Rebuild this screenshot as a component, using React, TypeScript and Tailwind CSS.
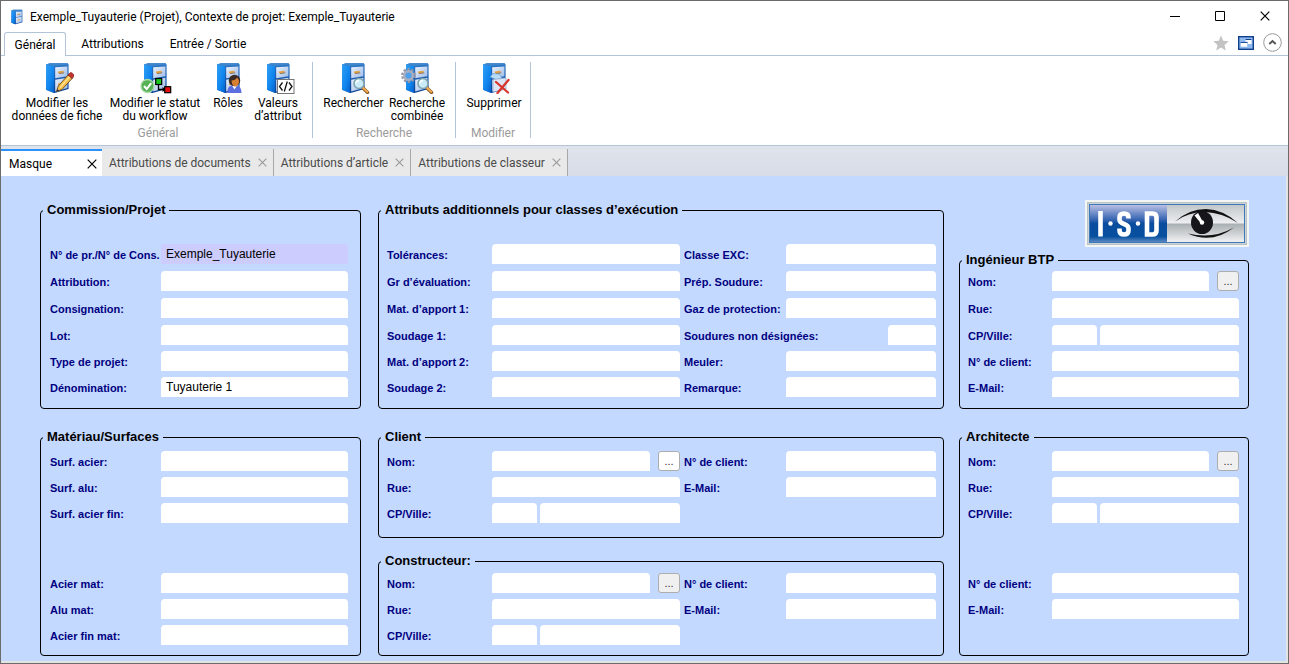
import React from "react";

function Cabinet() {
  return (
    <g>
      <defs>
        <linearGradient id="cabSide" x1="0" y1="0" x2="1" y2="1">
          <stop offset="0" stopColor="#2fa0f5" />
          <stop offset="0.6" stopColor="#0f84ee" />
          <stop offset="1" stopColor="#0560c4" />
        </linearGradient>
        <linearGradient id="cabFront" x1="0" y1="0" x2="0" y2="1">
          <stop offset="0" stopColor="#2f78c8" />
          <stop offset="1" stopColor="#0a3f96" />
        </linearGradient>
        <linearGradient id="cabDrawer" x1="0" y1="0" x2="1" y2="1">
          <stop offset="0" stopColor="#eaf1fc" />
          <stop offset="1" stopColor="#9dbbe8" />
        </linearGradient>
      </defs>
      <path d="M5 2.5 9 1.2H26.5L27.6 2.6V27L13.5 31 5 27.8Z" fill="url(#cabFront)" />
      <path d="M5 2.6 13 4V31L5 27.8Z" fill="url(#cabSide)" />
      <path d="M5 2.5 9 1.2H26.5L27.6 2.6 13 4Z" fill="#3f86cc" />
      <path d="M14.2 5.2 26.4 4.4V14.3L14.2 16.3Z" fill="url(#cabDrawer)" />
      <path d="M14.2 17.7 26.4 15.7V26L14.2 29.4Z" fill="url(#cabDrawer)" />
      <path d="M17 9.6 22.6 8.8V10.4L17 11.2Z" fill="#e5a23b" />
      <path d="M18 11.6 23.2 10.8" stroke="#7c5a33" strokeWidth="0.8" />
      <path d="M17 21.6 22.6 20.6V22.2L17 23.2Z" fill="#e5a23b" />
    </g>
  );
}

function Lens() {
  return (
    <g>
      <path d="m26 26 4.500 4.500" stroke="#8a5a30" strokeWidth="3.4" strokeLinecap="round" />
      <path d="m26 25.700 4.200 4.200" stroke="#f3ad4a" strokeWidth="2" strokeLinecap="round" />
      <circle cx="22" cy="21.5" r="5" fill="#c9ecf8" stroke="#7fa3ac" strokeWidth="1.5" />
      <path d="M19 21.5a3 3 0 0 1 3-3" stroke="#fff" strokeWidth="1.4" fill="none" />
    </g>
  );
}

const overlays: Record<string, React.ReactNode> = {
  none: null,
  edit: (
    <g>
      <path d="m15.500 29.500 1.800-5.500L27.500 12.500l4 3.500L21 27.500Z" fill="#f8c04a" stroke="#6b4a1c" strokeWidth="0.9" />
      <path d="m19 25.600 10-11.200" stroke="#fde59c" strokeWidth="1.300" />
      <path d="m27 13 1.800-2q1.200-1 2.500.2l1.300 1.200q1 1.200 0 2.300l-1.600 1.800Z" fill="#c2342f" stroke="#7c1f1c" strokeWidth="0.7" />
      <path d="m15.500 29.500.8-2.600 1.800 1.700Z" fill="#333" />
    </g>
  ),
  workflow: (
    <g>
      <circle cx="8.500" cy="24" r="6.500" fill="#55b356" stroke="#a9d8a8" strokeWidth="1.300" />
      <path d="m5 24 2.700 3 4.500-5.800" fill="none" stroke="#fff" strokeWidth="2" />
      <path d="M19.500 22v5.500h5" fill="none" stroke="#000" strokeWidth="1.300" />
      <path d="m23.500 25 3 2.500-3 2.500Z" fill="#000" />
      <rect x="16.700" y="16.500" width="6" height="6" fill="#18c81e" stroke="#000" strokeWidth="1.200" />
      <rect x="25.700" y="24.700" width="6" height="6" fill="#e30d0d" stroke="#000" strokeWidth="1.200" />
    </g>
  ),
  person: (
    <g>
      <path d="M15.500 31q-.4-7 4-7.500h5q5 .8 5 7.500Z" fill="#5c6fe0" />
      <path d="m20 23.500 2.500 4 2.500-4Z" fill="#fff" />
      <circle cx="22.500" cy="18.500" r="5.700" fill="#3b2a26" />
      <path d="M19.500 18.500q4-.2 5.500-3 2.500 2 2 5-1.300 4-4 4-3-.7-3.500-6Z" fill="#d98032" />
    </g>
  ),
  code: (
    <g>
      <rect x="15.500" y="17.500" width="16.500" height="14" fill="#fff" stroke="#777" />
      <path d="m20.500 20.500-3 4 3 4M27 20.500l3 4-3 4M25.300 19.500l-3 10" fill="none" stroke="#111" strokeWidth="1.300" />
    </g>
  ),
  search: <Lens />,
  combined: (
    <g>
      <circle cx="7.500" cy="13.500" r="6.200" fill="none" stroke="#9296a6" strokeWidth="2.400" strokeDasharray="2.400 1.500" />
      <circle cx="7.500" cy="13.500" r="4.300" fill="#4da0ec" stroke="#aaaebd" strokeWidth="2.400" />
      <Lens />
    </g>
  ),
  remove: (
    <g>
      <path d="m12 15 3-3.500 6 .5 3 3.500-5 2.500Z" fill="#b7dcf8" stroke="#5b90c6" strokeWidth="0.600" />
      <path d="M15 17.500 28 16v11l-13 3Z" fill="#dce6f6" stroke="#8ba5cc" strokeWidth="0.700" />
      <path d="m18 20 12 10.500M30.500 18 19.500 31" stroke="#d8362c" strokeWidth="2.300" strokeLinecap="round" />
    </g>
  ),
};

function CabinetIcon({ kind, className }: { kind: string; className: string }) {
  return (
    <svg viewBox="0 0 33 32" className={className} aria-hidden="true">
      <Cabinet />
      {overlays[kind]}
    </svg>
  );
}

function RibbonButton({ kind, lines, width }: { kind: string; lines: string[]; width: string }) {
  return (
    <button type="button" className={`flex flex-col items-center whitespace-nowrap ${width}`}>
      <CabinetIcon kind={kind} className="mb-[3px] h-8 w-[33px]" />
      {lines.map((line) => (
        <span key={line} className="leading-[13px]">
          {line}
        </span>
      ))}
    </button>
  );
}

function RibbonGroup({ title, children, pad }: { title: string; children: React.ReactNode; pad: string }) {
  return (
    <section className="flex flex-col justify-between border-r border-[#b4c4d8]">
      <div className={`flex ${pad}`}>{children}</div>
      <h2 className="text-center leading-[10px] text-[#9b9b9b]">{title}</h2>
    </section>
  );
}

function Cross({ className }: { className: string }) {
  return (
    <svg viewBox="0 0 10 10" className={className} aria-hidden="true">
      <path d="m.7.7 8.600 8.600M9.300.7.7 9.300" stroke="currentColor" strokeWidth="1.200" fill="none" />
    </svg>
  );
}

function DocumentTab({ label }: { label: string }) {
  return (
    <div className="flex items-center gap-[7px] border-r border-[#a8a8a8] bg-[#e9e9e9] pl-[7px] pr-[6px] text-[#4a4a4a]">
      <button type="button">{label}</button>
      <button type="button" aria-label={`Fermer ${label}`} className="text-[#9a9a9a]">
        <Cross className="size-[9px]" />
      </button>
    </div>
  );
}

function Group({ title, pad, className = "", children }: { title: string; pad: string; className?: string; children: React.ReactNode }) {
  return (
    <fieldset className={`min-w-0 rounded-[4px] border border-black ${className}`}>
      <legend className="ml-[2px] px-1 text-[13px] font-bold leading-4 text-black">{title}</legend>
      <div className={pad}>{children}</div>
    </fieldset>
  );
}

function Label({ id, text, className = "" }: { id: string; text: string; className?: string }) {
  return (
    <label htmlFor={id} className={`self-start whitespace-nowrap pt-[3px] text-[11px] font-bold leading-4 text-[#000080] ${className}`}>
      {text}
    </label>
  );
}

function Field({ id, value = "", className = "" }: { id: string; value?: string; className?: string }) {
  return (
    <input
      id={id}
      defaultValue={value}
      className={`h-5 min-w-0 rounded-t-[4px] px-[5px] text-[12px] text-black outline-none ${className || "w-full bg-white"}`}
    />
  );
}

function Browse({ tone }: { tone: string }) {
  return (
    <button type="button" aria-label="Parcourir" className={`flex h-5 w-[22px] shrink-0 items-center justify-center rounded-[3px] border border-[#adadad] text-[11px] leading-4 text-[#333] ${tone}`}>
      ...
    </button>
  );
}

function NameField({ id, tone }: { id: string; tone: string }) {
  return (
    <div className="flex min-w-0 justify-between gap-2">
      <Field id={id} className="flex-1 bg-white" />
      <Browse tone={tone} />
    </div>
  );
}

function CityField({ id }: { id: string }) {
  return (
    <div className="flex min-w-0 gap-[3px]">
      <Field id={id} className="w-[45px] bg-white" />
      <input aria-label="Ville" className="h-5 min-w-0 flex-1 rounded-t-[4px] bg-white px-[5px] text-[12px] outline-none" />
    </div>
  );
}

function Row({ id, label, value, fill }: { id: string; label: string; value?: string; fill?: string }) {
  return (
    <>
      <Label id={id} text={label} />
      <Field id={id} value={value} className={fill} />
    </>
  );
}

const leftGrid = "grid grid-cols-[111px_minmax(0,1fr)]";
const wideGrid = "grid grid-cols-[105px_minmax(0,188fr)_106px_minmax(0,150fr)]";
const rightGrid = "grid grid-cols-[84px_minmax(0,1fr)]";
const sixRows = "grid-rows-[27px_27px_27px_26px_26px_20px]";
const fiveRows = "grid-rows-[27px_27px_26px_26px_20px]";
const threeRows = "grid-rows-[26px_26px_20px]";

function Logo() {
  return (
    <svg viewBox="0 0 164 47" className="h-[47px] w-[164px]" role="img" aria-label="ISD">
      <defs>
        <linearGradient id="logoBlue" x1="0" y1="0" x2="0" y2="1">
          <stop offset="0" stopColor="#b9bfe4" />
          <stop offset="0.420" stopColor="#2d5fae" />
          <stop offset="0.500" stopColor="#0a4c9e" />
          <stop offset="0.850" stopColor="#07509f" />
          <stop offset="1" stopColor="#5a88c2" />
        </linearGradient>
        <linearGradient id="logoGrey" x1="0" y1="0" x2="0" y2="1">
          <stop offset="0" stopColor="#c2c7ca" />
          <stop offset="0.480" stopColor="#eceeef" />
          <stop offset="0.520" stopColor="#aab0b4" />
          <stop offset="1" stopColor="#f0f1f2" />
        </linearGradient>
      </defs>
      <rect width="164" height="47" fill="#f4f6f6" />
      <rect x="2" y="2" width="160" height="43" fill="#b9c3c4" />
      <rect x="3.500" y="3.500" width="157" height="40" fill="#dfe6ea" />
      <rect x="4" y="4" width="156" height="39" fill="#3d79b8" />
      <rect x="5" y="5" width="77" height="37" fill="url(#logoBlue)" />
      <rect x="82" y="5" width="77" height="37" fill="url(#logoGrey)" />
      <g fill="none" stroke="#fff" strokeWidth="4.600">
        <path d="M15.500 11v25.500" />
        <path d="M43.500 18.500v-1q0-4-4.500-4t-4.500 4v2q0 3 4.500 4.500t4.500 4.500v2q0 4-4.500 4t-4.500-4v-2" />
        <path d="M62 13.500h5.500q4 0 4 4v13q0 4-4 4H62Z" />
      </g>
      <circle cx="25.500" cy="23.500" r="2.200" fill="#fff" />
      <circle cx="53" cy="23.500" r="2.200" fill="#fff" />
      <path d="M90 21.500Q104 9 121 9q17 .5 32 14Q137 12.500 120 12 103 12 90 21.500Z" fill="#111" />
      <path d="M103 33.500q25 6 46-6-22 17-46 6Z" fill="#111" />
      <ellipse cx="117" cy="22.500" rx="11" ry="11.500" fill="#15151a" />
      <path d="m109.500 15.500 3.500-2.500 5 9-2 1.500Z" fill="#fff" />
      <circle cx="117" cy="22.500" r="2.200" fill="#fff" />
    </svg>
  );
}

export default function App() {
  return (
    <div className="flex min-h-screen flex-col border border-[#6b6b6b] bg-white font-[Roboto,'Open_Sans',sans-serif] text-[12px] text-black">
      <header className="flex h-[31px] items-center justify-between pl-2">
        <div className="flex items-center gap-[5px]">
          <CabinetIcon kind="none" className="size-4" />
          <h1 className="whitespace-nowrap">Exemple_Tuyauterie (Projet), Contexte de projet: Exemple_Tuyauterie</h1>
        </div>
        <div className="flex items-center pb-px">
          <button type="button" aria-label="Réduire" className="flex w-[45px] justify-center">
            <svg viewBox="0 0 10 10" className="size-[10px]"><path d="M0 5.500h10" stroke="#000" /></svg>
          </button>
          <button type="button" aria-label="Agrandir" className="flex w-[45px] justify-center">
            <svg viewBox="0 0 10 10" className="size-[10px]"><path d="M.5.5h9v9h-9Z" fill="none" stroke="#000" /></svg>
          </button>
          <button type="button" aria-label="Fermer" className="flex w-[46px] justify-center">
            <Cross className="size-[10px]" />
          </button>
        </div>
      </header>

      <nav className="flex h-[24px] items-stretch justify-between border-b border-[#b4c4d8] px-[3px]">
        <div className="flex items-stretch">
          <button type="button" className="-mb-px w-[62px] rounded-t-[3px] border border-b-0 border-[#b4c4d8] bg-white">Général</button>
          <button type="button" className="w-[93px] pt-px">Attributions</button>
          <button type="button" className="w-[98px] pt-px">Entrée / Sortie</button>
        </div>
        <div className="flex items-center gap-[9px] pb-[2px] pr-[3px]">
          <button type="button" aria-label="Favori">
            <svg viewBox="0 0 16 16" className="size-4"><path d="m8 .5 2.200 5.200 5.600.5-4.300 3.700 1.300 5.600L8 12.500l-4.800 3 1.300-5.600L.2 6.200l5.600-.5Z" fill="#c3c3c3" /></svg>
          </button>
          <button type="button" aria-label="Fenêtres">
            <svg viewBox="0 0 16 14" className="h-[14px] w-4">
              <rect x=".7" y=".7" width="14.600" height="12.600" fill="#8db9ee" stroke="#123f8c" strokeWidth="1.400" />
              <rect x="7.500" y="3" width="6" height="5" fill="#fff" />
              <path d="M7.500 3.500h6" stroke="#123f8c" />
              <rect x="2.500" y="6" width="7" height="5" fill="#fff" stroke="#7fb0ea" strokeWidth="0.500" />
              <path d="M2.500 6.500h7" stroke="#1d4f9c" />
            </svg>
          </button>
          <button type="button" aria-label="Réduire le ruban">
            <svg viewBox="0 0 19 19" className="size-[19px]">
              <circle cx="9.500" cy="9.500" r="8.800" fill="#fff" stroke="#999" />
              <path d="m6.300 11 3.200-3 3.200 3" fill="none" stroke="#555" strokeWidth="1.900" />
            </svg>
          </button>
        </div>
      </nav>

      <div className="flex h-[90px] border-b border-[#b4c4d8] pb-[7px] pl-[3px] pt-[6px]">
        <RibbonGroup title="Général" pad="pl-1 pr-2">
          <RibbonButton kind="edit" lines={["Modifier les", "données de fiche"]} width="w-[98px]" />
          <RibbonButton kind="workflow" lines={["Modifier le statut", "du workflow"]} width="w-[98px]" />
          <RibbonButton kind="person" lines={["Rôles"]} width="w-[48px]" />
          <RibbonButton kind="code" lines={["Valeurs", "d’attribut"]} width="w-[52px]" />
        </RibbonGroup>
        <RibbonGroup title="Recherche" pad="pl-[7px] pr-2">
          <RibbonButton kind="search" lines={["Rechercher"]} width="w-[67px]" />
          <RibbonButton kind="combined" lines={["Recherche", "combinée"]} width="w-[60px]" />
        </RibbonGroup>
        <RibbonGroup title="Modifier" pad="pl-[5px] pr-[3px]">
          <RibbonButton kind="remove" lines={["Supprimer"]} width="w-[66px]" />
        </RibbonGroup>
      </div>

      <div className="flex h-[30px] bg-linear-to-b from-[#dfe4ec] to-[#d8dce7] pt-[3px]">
        <div className="flex w-[101px] items-center justify-between border-t-2 border-[#2f92fb] bg-white pl-2 pr-[5px]">
          <button type="button">Masque</button>
          <button type="button" aria-label="Fermer Masque">
            <Cross className="size-[10px]" />
          </button>
        </div>
        <DocumentTab label="Attributions de documents" />
        <DocumentTab label="Attributions d’article" />
        <DocumentTab label="Attributions de classeur" />
      </div>

      <main className="flex flex-1 border-b-2 border-r-2 border-[#e3e3e3] bg-[#c4d9ff] pb-[5px] pl-[39px] pr-[37px] pt-[26px] font-['Liberation_Sans',Arial,sans-serif]">
        <div className="mr-[17px] flex min-w-0 flex-[321] flex-col gap-5">
          <Group title="Commission/Projet" pad={`${leftGrid} ${sixRows} pb-[11px] pl-[9px] pr-3 pt-[26px]`}>
            <Row id="no" label="N° de pr./N° de Cons." value="Exemple_Tuyauterie" fill="w-full bg-[#ccccff]" />
            <Row id="attribution" label="Attribution:" />
            <Row id="consignation" label="Consignation:" />
            <Row id="lot" label="Lot:" />
            <Row id="type" label="Type de projet:" />
            <Row id="denomination" label="Dénomination:" value="Tuyauterie 1" />
          </Group>
          <Group title="Matériau/Surfaces" className="flex-1" pad="flex flex-col gap-[50px] pb-[10px] pl-[9px] pr-3 pt-[6px]">
            <div className={`${leftGrid} ${threeRows}`}>
              <Row id="surf-acier" label="Surf. acier:" />
              <Row id="surf-alu" label="Surf. alu:" />
              <Row id="surf-fin" label="Surf. acier fin:" />
            </div>
            <div className={`${leftGrid} ${threeRows}`}>
              <Row id="acier-mat" label="Acier mat:" />
              <Row id="alu-mat" label="Alu mat:" />
              <Row id="fin-mat" label="Acier fin mat:" />
            </div>
          </Group>
        </div>

        <div className="mr-[15px] flex min-w-0 flex-[566] flex-col">
          <Group title="Attributs additionnels pour classes d’exécution" pad={`${wideGrid} ${sixRows} pb-[11px] pl-2 pr-[7px] pt-[26px]`}>
            <Row id="tolerances" label="Tolérances:" />
            <Label id="exc" text="Classe EXC:" className="pl-1" />
            <Field id="exc" />
            <Row id="evaluation" label="Gr d’évaluation:" />
            <Label id="prep" text="Prép. Soudure:" className="pl-1" />
            <Field id="prep" />
            <Row id="apport1" label="Mat. d’apport 1:" />
            <Label id="gaz" text="Gaz de protection:" className="pl-1" />
            <Field id="gaz" />
            <Row id="soudage1" label="Soudage 1:" />
            <Label id="soudures" text="Soudures non désignées:" className="pl-1" />
            <Field id="soudures" className="w-12 justify-self-end bg-white" />
            <Row id="apport2" label="Mat. d’apport 2:" />
            <Label id="meuler" text="Meuler:" className="pl-1" />
            <Field id="meuler" />
            <Row id="soudage2" label="Soudage 2:" />
            <Label id="remarque" text="Remarque:" className="pl-1" />
            <Field id="remarque" />
          </Group>
          <Group title="Client" className="mt-5" pad={`${wideGrid} ${threeRows} pb-[14px] pl-2 pr-[7px] pt-[6px]`}>
            <Label id="client-nom" text="Nom:" />
            <NameField id="client-nom" tone="bg-white" />
            <Label id="client-no" text="N° de client:" className="pl-1" />
            <Field id="client-no" />
            <Row id="client-rue" label="Rue:" />
            <Label id="client-mail" text="E-Mail:" className="pl-1" />
            <Field id="client-mail" />
            <Label id="client-cp" text="CP/Ville:" />
            <CityField id="client-cp" />
          </Group>
          <Group title="Constructeur:" className="mt-[15px] flex-1" pad={`${wideGrid} ${threeRows} pb-[10px] pl-2 pr-[7px] pt-1`}>
            <Label id="cons-nom" text="Nom:" />
            <NameField id="cons-nom" tone="bg-[#f0f0f0]" />
            <Label id="cons-no" text="N° de client:" className="pl-1" />
            <Field id="cons-no" />
            <Row id="cons-rue" label="Rue:" />
            <Label id="cons-mail" text="E-Mail:" className="pl-1" />
            <Field id="cons-mail" />
            <Label id="cons-cp" text="CP/Ville:" />
            <CityField id="cons-cp" />
          </Group>
        </div>

        <div className="flex min-w-0 flex-[290] flex-col">
          <div className="-mt-[2px] flex justify-end">
            <Logo />
          </div>
          <Group title="Ingénieur BTP" className="mt-[5px]" pad={`${rightGrid} ${fiveRows} pb-[11px] pl-2 pr-[9px] pt-[3px]`}>
            <Label id="ing-nom" text="Nom:" />
            <NameField id="ing-nom" tone="bg-[#f0f0f0]" />
            <Row id="ing-rue" label="Rue:" />
            <Label id="ing-cp" text="CP/Ville:" />
            <CityField id="ing-cp" />
            <Row id="ing-no" label="N° de client:" />
            <Row id="ing-mail" label="E-Mail:" />
          </Group>
          <Group title="Architecte" className="mt-5 flex-1" pad="flex flex-col gap-[50px] pb-[10px] pl-2 pr-[9px] pt-[6px]">
            <div className={`${rightGrid} ${threeRows}`}>
              <Label id="arch-nom" text="Nom:" />
              <NameField id="arch-nom" tone="bg-[#f0f0f0]" />
              <Row id="arch-rue" label="Rue:" />
              <Label id="arch-cp" text="CP/Ville:" />
              <CityField id="arch-cp" />
            </div>
            <div className={`${rightGrid} grid-rows-[26px_20px]`}>
              <Row id="arch-no" label="N° de client:" />
              <Row id="arch-mail" label="E-Mail:" />
            </div>
          </Group>
        </div>
      </main>
    </div>
  );
}
